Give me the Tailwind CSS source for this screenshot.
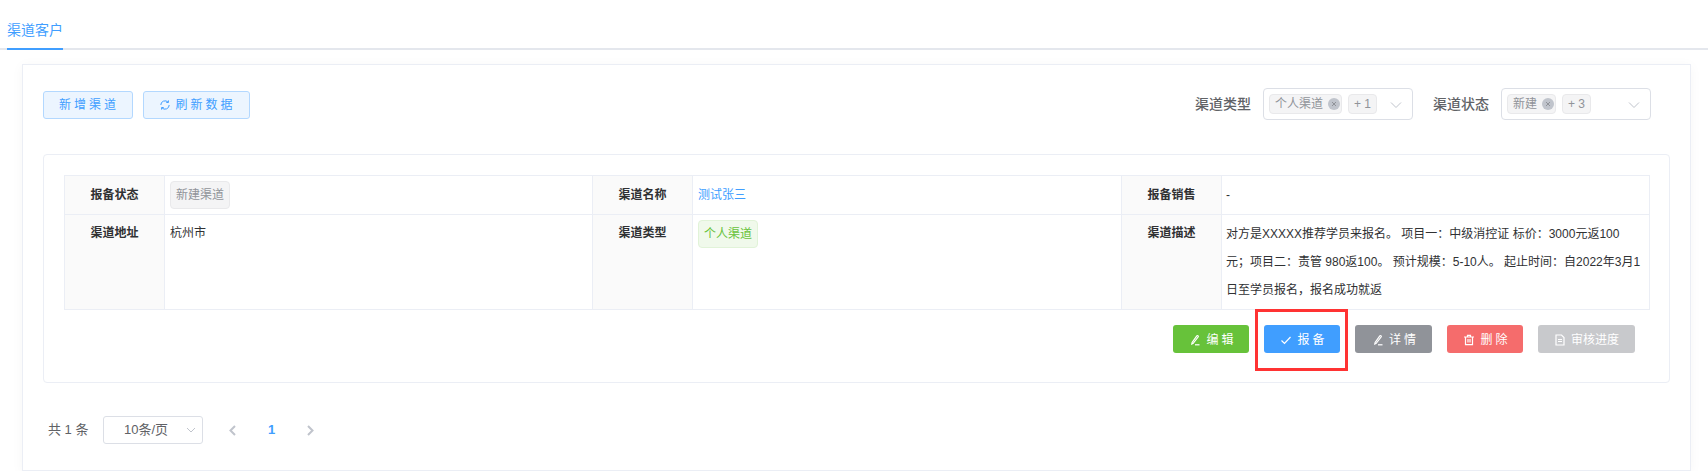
<!DOCTYPE html>
<html lang="zh-CN">
<head>
  <meta charset="UTF-8">
  <title>渠道客户</title>
  <script src="https://cdn.jsdelivr.net/npm/@tailwindcss/browser@4"></script>
</head>
<body class="bg-white font-['Liberation_Sans','Noto_Sans_CJK_SC',sans-serif] text-[#303133]">

  <!-- Tabs -->
  <div class="h-[50px] border-b-2 border-[#e4e7ed] pl-[7px]">
    <div class="w-[56px] h-[50px] border-b-2 border-[#409eff] pt-[19px] text-sm leading-[22px] text-[#409eff] whitespace-nowrap">渠道客户</div>
  </div>

  <!-- Main card -->
  <div class="ml-[22px] mt-[14px] w-[1669px] h-[407px] border border-[#ebeef5] shadow-[0_2px_12px_0_rgba(0,0,0,0.04)] px-[20px]">

    <!-- Toolbar -->
    <div class="flex justify-between h-[89px]">
      <div class="flex gap-[10px] pt-[26px]">
        <button class="w-[90px] h-[28px] pl-[2px] rounded-[3px] border border-[#b3d8ff] bg-[#ecf5ff] text-xs text-[#409eff] tracking-[3px]">新增渠道</button>
        <button class="w-[107px] h-[28px] pl-[2px] rounded-[3px] border border-[#b3d8ff] bg-[#ecf5ff] text-xs text-[#409eff] tracking-[3px] flex items-center justify-center gap-[4px]">
          <svg class="w-[12px] h-[12px]" viewBox="0 0 12 12" fill="none" stroke="#409eff" stroke-width="1"><path d="M1.8 6a4.2 4.2 0 0 1 7.3-2.8M10.2 6a4.2 4.2 0 0 1-7.3 2.8"/><path d="M9.4 1.4v2.1H7.3M2.6 10.6V8.5h2.1"/></svg>
          刷新数据
        </button>
      </div>
      <div class="flex items-start pt-[23px] pr-[19px]">
        <span class="w-[56px] text-sm font-medium leading-[32px] text-[#606266] whitespace-nowrap">渠道类型</span>
        <div class="ml-[12px] w-[150px] h-[32px] rounded-[4px] border border-[#dcdfe6] flex items-center pl-[5px]">
          <span class="w-[73px] h-[20px] rounded-[4px] border border-[#e9e9eb] bg-[#f4f4f5] text-xs text-[#909399] flex items-center pl-[5px] gap-[5px] whitespace-nowrap">个人渠道
            <span class="w-[12px] h-[12px] rounded-full bg-[#c0c4cc] flex items-center justify-center"><svg class="w-[6px] h-[6px]" viewBox="0 0 6 6" stroke="#909399" stroke-width="1"><path d="M1 1l4 4M5 1l-4 4"/></svg></span>
          </span>
          <span class="ml-[6px] w-[29px] h-[20px] rounded-[4px] border border-[#e9e9eb] bg-[#f4f4f5] text-xs text-[#909399] flex items-center justify-center">+ 1</span>
          <svg class="ml-[13px] mt-[2px] w-[12px] h-[8px]" viewBox="0 0 12 8" fill="none" stroke="#c0c4cc"><path d="M1 1.5l5 5 5-5"/></svg>
        </div>
        <span class="ml-[20px] w-[56px] text-sm font-medium leading-[32px] text-[#606266] whitespace-nowrap">渠道状态</span>
        <div class="ml-[12px] w-[150px] h-[32px] rounded-[4px] border border-[#dcdfe6] flex items-center pl-[5px]">
          <span class="w-[49px] h-[20px] rounded-[4px] border border-[#e9e9eb] bg-[#f4f4f5] text-xs text-[#909399] flex items-center pl-[5px] gap-[5px] whitespace-nowrap">新建
            <span class="w-[12px] h-[12px] rounded-full bg-[#c0c4cc] flex items-center justify-center"><svg class="w-[6px] h-[6px]" viewBox="0 0 6 6" stroke="#909399" stroke-width="1"><path d="M1 1l4 4M5 1l-4 4"/></svg></span>
          </span>
          <span class="ml-[6px] w-[29px] h-[20px] rounded-[4px] border border-[#e9e9eb] bg-[#f4f4f5] text-xs text-[#909399] flex items-center justify-center">+ 3</span>
          <svg class="ml-[37px] mt-[2px] w-[12px] h-[8px]" viewBox="0 0 12 8" fill="none" stroke="#c0c4cc"><path d="M1 1.5l5 5 5-5"/></svg>
        </div>
      </div>
    </div>

    <!-- Record card -->
    <div class="w-[1627px] h-[229px] rounded-[4px] border border-[#ebeef5] px-[20px] pt-[20px]">
      <table class="w-[1586px] table-fixed border-collapse text-xs">
        <colgroup>
          <col class="w-[100px]"><col class="w-[428px]"><col class="w-[100px]"><col class="w-[429px]"><col class="w-[100px]"><col>
        </colgroup>
        <tr class="h-[39px]">
          <th class="border border-[#ebeef5] bg-[#fafafa] font-bold">报备状态</th>
          <td class="border border-[#ebeef5] px-[5px]"><span class="inline-flex items-center justify-center w-[60px] h-[28px] rounded-[4px] border border-[#e9e9eb] bg-[#f4f4f5] text-[#909399]">新建渠道</span></td>
          <th class="border border-[#ebeef5] bg-[#fafafa] font-bold">渠道名称</th>
          <td class="border border-[#ebeef5] px-[5px] text-[#409eff]">测试张三</td>
          <th class="border border-[#ebeef5] bg-[#fafafa] font-bold">报备销售</th>
          <td class="border border-[#ebeef5] px-[4px]">-</td>
        </tr>
        <tr class="h-[95px]">
          <th class="border border-[#ebeef5] bg-[#fafafa] font-bold align-top pt-[10px]">渠道地址</th>
          <td class="border border-[#ebeef5] px-[5px] align-top pt-[10px]">杭州市</td>
          <th class="border border-[#ebeef5] bg-[#fafafa] font-bold align-top pt-[10px]">渠道类型</th>
          <td class="border border-[#ebeef5] px-[5px] align-top pt-[5px]"><span class="inline-flex items-center justify-center w-[60px] h-[28px] rounded-[4px] border border-[#e1f3d8] bg-[#f0f9eb] text-[#67c23a]">个人渠道</span></td>
          <th class="border border-[#ebeef5] bg-[#fafafa] font-bold align-top pt-[10px]">渠道描述</th>
          <td class="border border-[#ebeef5] px-[4px] align-top leading-[28px] whitespace-nowrap pt-[5px]">对方是XXXXX推荐学员来报名。 项目一：中级消控证 标价：3000元返100<br>元；项目二：责管 980返100。 预计规模：5-10人。 起止时间：自2022年3月1<br>日至学员报名，报名成功就返</td>
        </tr>
      </table>

      <!-- Actions -->
      <div class="flex justify-end gap-[15px] pr-[14px] pt-[15px]">
        <button class="w-[76px] h-[28px] pl-[4px] pt-px rounded-[3px] bg-[#67c23a] text-xs text-white tracking-[3px] flex items-center justify-center gap-[5px]">
          <svg class="w-[12px] h-[12px]" viewBox="0 0 12 12" fill="none" stroke="#fff" stroke-width="1.2"><path d="M4 9.5L2.8 10l.3-1.6L7.8 1.8c.5-.6 1.9.2 1.5 1L4 9.5z"/><path d="M6 10.8h4.5"/></svg>
          编辑
        </button>
        <button class="w-[76px] h-[28px] pl-[4px] pt-px rounded-[3px] bg-[#409eff] text-xs text-white tracking-[3px] flex items-center justify-center gap-[5px]">
          <svg class="w-[12px] h-[12px]" viewBox="0 0 12 12" fill="none" stroke="#fff" stroke-width="1.2"><path d="M1.5 6.5l3 3 6-6.5"/></svg>
          报备
        </button>
        <button class="w-[77px] h-[28px] pl-[4px] pt-px rounded-[3px] bg-[#909399] text-xs text-white tracking-[3px] flex items-center justify-center gap-[5px]">
          <svg class="w-[12px] h-[12px]" viewBox="0 0 12 12" fill="none" stroke="#fff" stroke-width="1.2"><path d="M4 9.5L2.8 10l.3-1.6L7.8 1.8c.5-.6 1.9.2 1.5 1L4 9.5z"/><path d="M6 10.8h4.5"/></svg>
          详情
        </button>
        <button class="w-[76px] h-[28px] pl-[4px] pt-px rounded-[3px] bg-[#f56c6c] text-xs text-white tracking-[3px] flex items-center justify-center gap-[5px]">
          <svg class="w-[12px] h-[12px]" viewBox="0 0 12 12" fill="none" stroke="#fff" stroke-width="1.2"><path d="M1 3h10M4.5 3V1.3h3V3M2.5 3v7.7h7V3M5 5v3.5M7 5v3.5"/></svg>
          删除
        </button>
        <button class="w-[97px] h-[28px] pt-px rounded-[3px] bg-[#c8c9cc] text-xs text-white flex items-center justify-center gap-[5px]">
          <svg class="w-[12px] h-[12px]" viewBox="0 0 12 12" fill="none" stroke="#fff" stroke-width="1.2"><path d="M2 1h5.5L10 3.5v7.5H2zM4 5.5h4M4 7.5h4"/></svg>
          审核进度
        </button>
      </div>
    </div>

    <!-- Pagination -->
    <div class="flex items-center h-[28px] mt-[33px] pl-[5px] text-[13px] text-[#606266]">
      <span class="w-[41px] whitespace-nowrap">共 1 条</span>
      <div class="ml-[14px] w-[100px] h-[28px] rounded-[3px] border border-[#dcdfe6] flex items-center pl-[20px] whitespace-nowrap">10条/页
        <svg class="ml-[18px] w-[10px] h-[7px]" viewBox="0 0 10 7" fill="none" stroke="#c0c4cc"><path d="M1 1l4 4 4-4"/></svg>
      </div>
      <svg class="ml-[26px] w-[7px] h-[11px]" viewBox="0 0 7 11" fill="none" stroke="#c0c4cc" stroke-width="2"><path d="M6 1L1.5 5.5 6 10"/></svg>
      <span class="ml-[32px] w-[8px] font-bold text-[#409eff]">1</span>
      <svg class="ml-[31px] w-[7px] h-[11px]" viewBox="0 0 7 11" fill="none" stroke="#c0c4cc" stroke-width="2"><path d="M1 1l4.5 4.5L1 10"/></svg>
    </div>
  </div>

  <!-- Highlight around the 报备 button -->
  <div class="absolute left-[1255px] top-[309px] w-[93px] h-[62px] border-[3px] border-[#ff3333]"></div>
</body>
</html>
